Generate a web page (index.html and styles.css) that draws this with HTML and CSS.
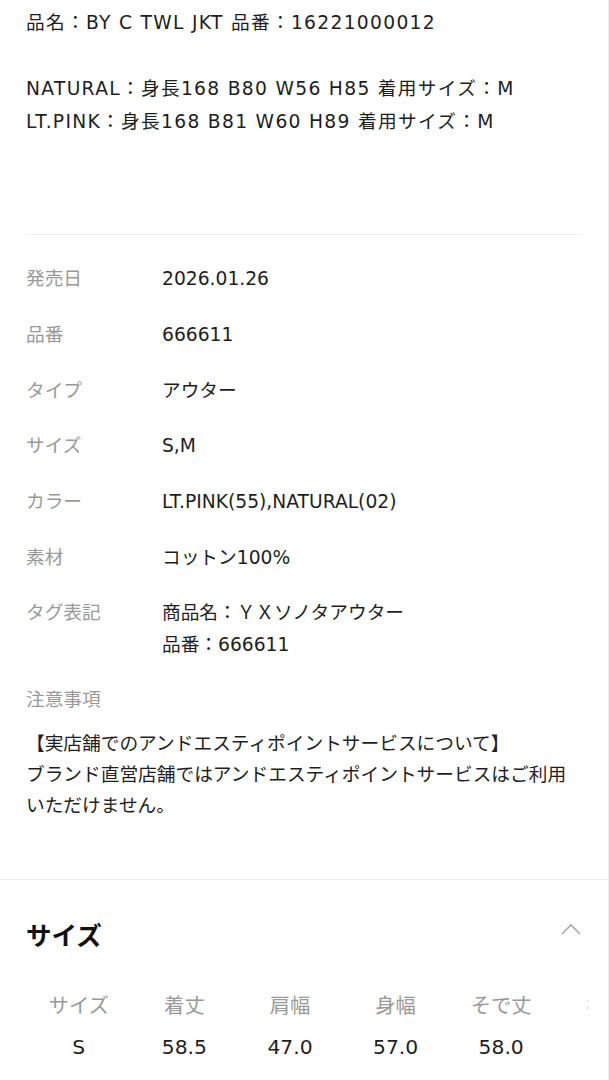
FILE: index.html
```html
<!DOCTYPE html>
<html lang="ja">
<head>
  <meta charset="UTF-8">
  <meta name="viewport" content="width=device-width, initial-scale=1.0">
  <title>商品詳細</title>
  <link rel="stylesheet" href="styles.css">
</head>
<body>
  <div class="page">
    <!-- 商品説明 -->
    <div class="desc">
      <p>品名：BY C TWL JKT 品番：16221000012<br><br>NATURAL：身長168 B80 W56 H85 着用サイズ：M<br>LT.PINK：身長168 B81 W60 H89 着用サイズ：M</p>
    </div>
    <hr class="divider">

    <!-- 商品情報 -->
    <div class="spec">
      <div class="spec-row">
        <div class="spec-label">発売日</div>
        <div class="spec-value">2026.01.26</div>
      </div>
      <div class="spec-row">
        <div class="spec-label">品番</div>
        <div class="spec-value">666611</div>
      </div>
      <div class="spec-row">
        <div class="spec-label">タイプ</div>
        <div class="spec-value">アウター</div>
      </div>
      <div class="spec-row">
        <div class="spec-label">サイズ</div>
        <div class="spec-value">S,M</div>
      </div>
      <div class="spec-row">
        <div class="spec-label">カラー</div>
        <div class="spec-value">LT.PINK(55),NATURAL(02)</div>
      </div>
      <div class="spec-row">
        <div class="spec-label">素材</div>
        <div class="spec-value">コットン100%</div>
      </div>
      <div class="spec-row">
        <div class="spec-label">タグ表記</div>
        <div class="spec-value">商品名：ＹＸソノタアウター<br>品番：666611</div>
      </div>
      <div class="spec-row">
        <div class="spec-label">注意事項</div>
      </div>
      <p class="note">【実店舗でのアンドエスティポイントサービスについて】<br>ブランド直営店舗ではアンドエスティポイントサービスはご利用いただけません。</p>
    </div>

    <!-- サイズ -->
    <div class="size-section">
      <div class="size-head">
        <h2>サイズ</h2>
        <svg class="chevron" width="20" height="12" viewBox="0 0 20 12">
          <polyline points="1,11 10,2 19,11" fill="none" stroke="#aaa" stroke-width="1.6"/>
        </svg>
      </div>
      <div class="size-scroll">
        <table class="size-table">
          <tr>
            <th>サイズ</th>
            <th>着丈</th>
            <th>肩幅</th>
            <th>身幅</th>
            <th>そで丈</th>
            <th>裄丈</th>
          </tr>
          <tr>
            <td>S</td>
            <td>58.5</td>
            <td>47.0</td>
            <td>57.0</td>
            <td>58.0</td>
            <td>-</td>
          </tr>
        </table>
      </div>
    </div>
  </div>
</body>
</html>
```

FILE: styles.css
```css
body {
  margin: 0;
  background: #fff;
  color: #1e1e1e;
  font-family: "DejaVu Sans", "Noto Sans CJK JP", sans-serif;
  font-size: 18.7px;
}
.page {
  border-right: 1px solid #ededed;
  min-height: 1080px;
  overflow: hidden;
}
.desc {
  padding: 6px 26px 0;
}
.desc p {
  margin: 0 0 96px;
  line-height: 33px;
  letter-spacing: 1.3px;
}
.divider {
  margin: 0 26px;
  border: 0;
  border-top: 1px solid #f0f0f0;
}
.spec {
  padding: 16px 26px 0;
}
.spec-row {
  display: grid;
  grid-template-columns: 136px 1fr;
  padding: 12.25px 0;
  line-height: 31.2px;
}
.spec-label {
  color: #999;
}
.spec-value {
  color: #1e1e1e;
}
.note {
  margin: 0;
  padding-bottom: 58px;
  line-height: 31.2px;
}
.size-section {
  border-top: 1px solid #ececec;
  padding: 38px 26px 40px;
}
.size-head {
  display: flex;
  justify-content: space-between;
  align-items: flex-start;
}
.size-head h2 {
  margin: 0;
  font-size: 25.5px;
  line-height: 36px;
  font-weight: 700;
  color: #111;
}
.chevron {
  margin-top: 5px;
  margin-right: 1px;
}
.size-scroll {
  margin-top: 37px;
  margin-right: -6px;
  overflow: hidden;
}
.size-table {
  border-collapse: collapse;
  table-layout: fixed;
  white-space: nowrap;
  font-size: 20.3px;
}
.size-table th,
.size-table td {
  width: 105.6px;
  min-width: 105.6px;
  padding: 0;
  text-align: center;
  line-height: 30px;
}
.size-table th {
  color: #999;
  font-weight: 400;
}
.size-table td {
  padding-top: 11px;
  color: #1e1e1e;
}
```
